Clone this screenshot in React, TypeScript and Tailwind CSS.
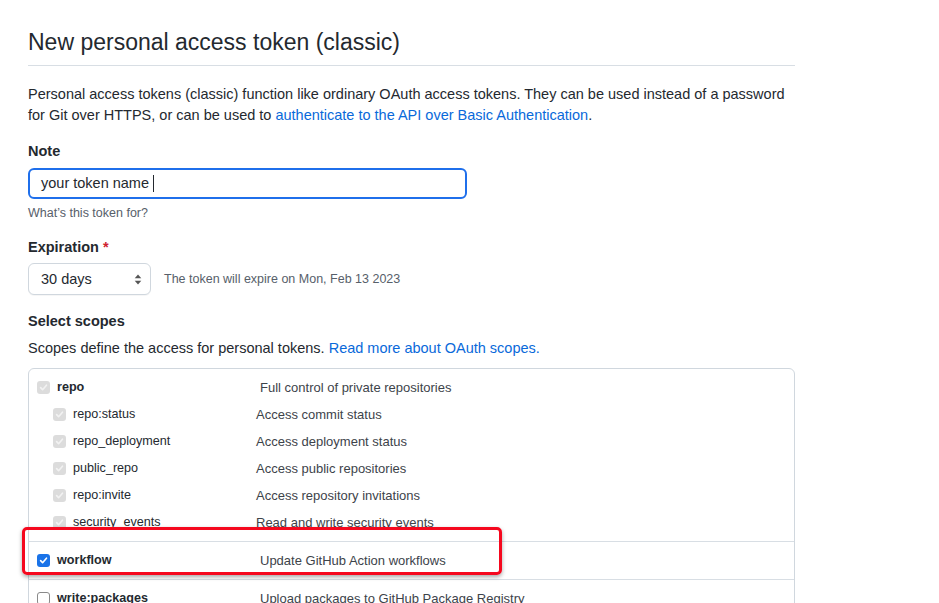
import React from 'react';

type Scope = { name: string; desc: string; state: 'disabled' | 'checked' | 'empty'; nested?: boolean; bold?: boolean };

const groups: Scope[][] = [
  [
    { name: 'repo', desc: 'Full control of private repositories', state: 'disabled', bold: true },
    { name: 'repo:status', desc: 'Access commit status', state: 'disabled', nested: true },
    { name: 'repo_deployment', desc: 'Access deployment status', state: 'disabled', nested: true },
    { name: 'public_repo', desc: 'Access public repositories', state: 'disabled', nested: true },
    { name: 'repo:invite', desc: 'Access repository invitations', state: 'disabled', nested: true },
    { name: 'security_events', desc: 'Read and write security events', state: 'disabled', nested: true },
  ],
  [{ name: 'workflow', desc: 'Update GitHub Action workflows', state: 'checked', bold: true }],
  [{ name: 'write:packages', desc: 'Upload packages to GitHub Package Registry', state: 'empty', bold: true }],
];

function Box({ state }: { state: Scope['state'] }) {
  if (state === 'checked') {
    return (
      <span className="w-[13px] h-[13px] rounded-[3px] bg-[#1a73e8] flex items-center justify-center shrink-0">
        <svg width="9" height="9" viewBox="0 0 10 10">
          <path d="M1.8 5.2 L4 7.4 L8.3 2.4" fill="none" stroke="#fff" strokeWidth="1.8" strokeLinecap="round" strokeLinejoin="round" />
        </svg>
      </span>
    );
  }
  if (state === 'disabled') {
    return (
      <span className="w-[13px] h-[13px] rounded-[3px] bg-[#dcdcdc] flex items-center justify-center shrink-0">
        <svg width="9" height="9" viewBox="0 0 10 10">
          <path d="M1.8 5.2 L4 7.4 L8.3 2.4" fill="none" stroke="#f2f2f2" strokeWidth="1.8" strokeLinecap="round" strokeLinejoin="round" />
        </svg>
      </span>
    );
  }
  return <span className="w-[13px] h-[13px] rounded-[3px] bg-white border border-[#8a8a8a] shrink-0" />;
}

function Row({ s }: { s: Scope }) {
  return (
    <div className={`h-[27px] flex items-center ${s.nested ? 'pl-[24px]' : 'pl-[8px]'}`}>
      <Box state={s.state} />
      <span className={`ml-[7px] ${s.nested ? 'w-[183px]' : 'w-[203px]'} text-[12.6px] ${s.bold ? 'font-semibold' : ''} text-[#24292f]`}>{s.name}</span>
      <span className="text-[13px] text-[#3d434a]">{s.desc}</span>
    </div>
  );
}

export default function App() {
  return (
    <div className="bg-white min-h-screen pl-[28px] text-[14.5px] leading-[21px] text-[#24292f] font-['Liberation_Sans',Arial,sans-serif]">
      <div className="w-[767px]">
        <div className="pt-[27px] pb-[8px] border-b border-[#d8dee4]">
          <h1 className="text-[23px] leading-[30px] font-normal">New personal access token (classic)</h1>
        </div>

        <p className="mt-[18px]">
          Personal access tokens (classic) function like ordinary OAuth access tokens. They can be used instead of a password
          <br />
          for Git over HTTPS, or can be used to <a className="text-[#0969da]">authenticate to the API over Basic Authentication</a>.
        </p>

        <div className="mt-[15px] font-semibold">Note</div>
        <div className="mt-[6px] w-[439px] h-[31px] rounded-[6px] border-2 border-[#1f6feb] flex items-center px-[11px]">
          <span>your token name</span>
          <span className="ml-[4px] w-px h-[17px] bg-[#24292f]" />
        </div>
        <div className="mt-[5px] text-[12.5px] leading-[18px] text-[#57606a]">What’s this token for?</div>

        <div className="mt-[15px] font-semibold">
          Expiration <span className="text-[#cf222e]">*</span>
        </div>
        <div className="mt-[5px] flex items-center">
          <div className="w-[123px] h-[32px] rounded-[6px] border border-[#d0d7de] bg-white shadow-[0_1px_0_rgba(27,31,36,0.04)] flex items-center justify-between pl-[12px] pr-[8px]">
            <span>30 days</span>
            <svg width="8" height="11" viewBox="0 0 8 11">
              <path d="M4 0.5 L7.3 4.2 L0.7 4.2 Z" fill="#555" />
              <path d="M4 10.5 L7.3 6.8 L0.7 6.8 Z" fill="#555" />
            </svg>
          </div>
          <span className="ml-[13px] text-[12.5px] text-[#57606a]">The token will expire on Mon, Feb 13 2023</span>
        </div>

        <div className="mt-[16px] font-semibold">Select scopes</div>
        <p className="mt-[6px]">
          Scopes define the access for personal tokens. <a className="text-[#0969da]">Read more about OAuth scopes.</a>
        </p>

        <div className="relative mt-[9px] border border-[#d0d7de] rounded-[6px]">
          {groups.map((g, i) => (
            <div key={i} className={`${i > 0 ? 'border-t border-[#d8dee4]' : ''} py-[5px]`}>
              {g.map((s) => (
                <Row key={s.name} s={s} />
              ))}
            </div>
          ))}
          <div className="absolute left-[-7px] top-[158px] w-[480px] h-[48px] border-[3px] border-[#f5081e] rounded-[5px] shadow-[0_2px_4px_rgba(0,0,0,0.35)] pointer-events-none" />
        </div>
      </div>
    </div>
  );
}
